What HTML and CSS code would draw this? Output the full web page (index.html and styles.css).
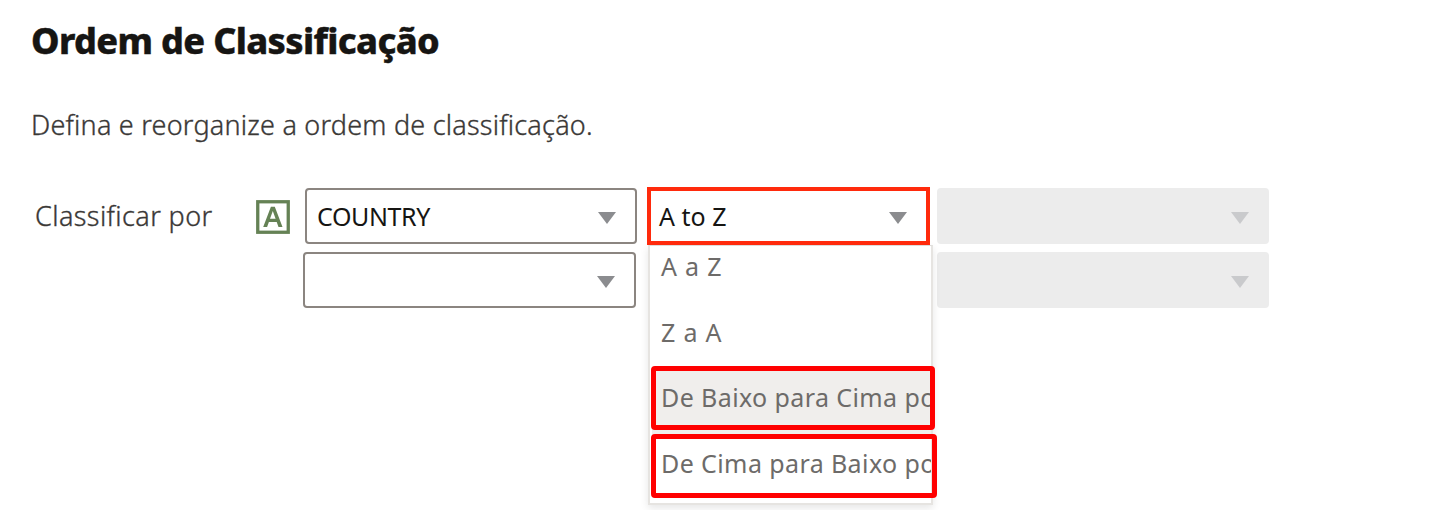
FILE: index.html
```html
<!DOCTYPE html>
<html lang="pt-BR">
<head>
<meta charset="utf-8">
<title>Ordem de Classificação</title>
<link rel="stylesheet" href="styles.css">
</head>
<body>
<main class="panel">
  <h1 class="title">Ordem de Classificação</h1>
  <p class="intro">Defina e reorganize a ordem de classificação.</p>
  <div class="sort-row">
    <span class="label">Classificar por</span>
    <svg class="type-icon" viewBox="0 0 34 34"><rect x="1.75" y="1.75" width="30.5" height="30.5" fill="none" stroke="#658255" stroke-width="3.3"/><path fill="#658255" fill-rule="evenodd" d="M14.9 6.8H18.8L26.5 27H22.5L20.7 22H12.9L11.1 27H7.2ZM14 18.8H19.6L16.8 10.9Z"/></svg>
    <div class="select"><span class="country">COUNTRY</span><svg class="arrow" viewBox="0 0 18 12"><path d="M0 0H18L9 12Z"/></svg></div>
    <div class="order">
      <div class="select active"><span>A to Z</span><svg class="arrow" viewBox="0 0 18 12"><path d="M0 0H18L9 12Z"/></svg></div>
      <ul class="menu">
        <li class="option short">A a Z</li>
        <li class="option short">Z a A</li>
        <li class="option hover">De Baixo para Cima po</li>
        <li class="option">De Cima para Baixo po</li>
      </ul>
      <div class="mark mark-up"></div>
      <div class="mark mark-down"></div>
    </div>
    <div class="select disabled"><svg class="arrow" viewBox="0 0 18 12"><path d="M0 0H18L9 12Z"/></svg></div>
  </div>
  <div class="sort-row second">
    <div class="select empty"><svg class="arrow" viewBox="0 0 18 12"><path d="M0 0H18L9 12Z"/></svg></div>
    <div class="select disabled"><svg class="arrow" viewBox="0 0 18 12"><path d="M0 0H18L9 12Z"/></svg></div>
  </div>
</main>
</body>
</html>
```
FILE: styles.css
```css
* { box-sizing: border-box; }
body {
  margin: 0;
  background: #fff;
  color: #3a3836;
  font-family: "Noto Sans", "Open Sans", sans-serif;
  overflow: hidden;
}
.panel { width: 1444px; height: 510px; padding: 16px 0 0 31px; }
.title {
  margin: 0;
  font-size: 36px;
  line-height: 50px;
  font-weight: 800;
  letter-spacing: -.65px;
  color: #161513;
  white-space: nowrap;
  -webkit-text-stroke: .4px #161513;
}
.intro {
  margin: 39px 0 43px;
  font-size: 27px;
  font-weight: 300;
  letter-spacing: .22px;
  line-height: 40px;
  white-space: nowrap;
  -webkit-text-stroke: .35px #3a3836;
}
.sort-row { display: flex; height: 56px; }
.label {
  width: 225px;
  padding-left: 4px;
  font-size: 27px;
  font-weight: 300;
  letter-spacing: .4px;
  line-height: 55px;
  white-space: nowrap;
  -webkit-text-stroke: .35px #3a3836;
}
.type-icon { width: 34px; height: 34px; margin: 12px 15px 0 0; }
.select {
  display: flex;
  align-items: center;
  width: 332px;
  height: 56px;
  padding: 0 19px 0 10px;
  border: 2px solid #8b8580;
  border-radius: 4px;
  color: #161513;
  font-size: 25px;
  background: #fff;
  white-space: nowrap;
}
.country { letter-spacing: -.4px; }
.arrow { width: 18px; height: 12px; margin: 4px 0 0 auto; fill: #8b8c8f; }
.order { position: relative; width: 283px; margin: -1px 7px 0 10px; }
.active {
  position: relative;
  z-index: 2;
  width: 283px;
  height: 58px;
  padding: 0 19px 0 8px;
  border: 4px solid #ff2a0c;
  border-radius: 0;
}
.disabled { border: 0; background: #ececec; padding-right: 20px; }
.disabled .arrow { fill: #c9cacc; }
.second { margin-top: 8px; padding-left: 272px; }
.empty { width: 333px; margin-right: 301px; }
.menu {
  position: absolute;
  z-index: 1;
  top: 58px;
  left: 1px;
  width: 285px;
  height: 260px;
  margin: 0;
  padding: 0 0 0 2px;
  overflow: hidden;
  list-style: none;
  background: #fff;
  border: 2px solid #e6e4e1;
  border-top: 1px solid #dedcda;
  box-shadow: 0 3px 8px rgba(0, 0, 0, .1);
}
.option {
  height: 65.6px;
  padding-left: 9px;
  color: #6d6b69;
  font-size: 25px;
  letter-spacing: .4px;
  line-height: 41px;
  white-space: nowrap;
}
.short { letter-spacing: .8px; }
.hover { height: 69px; margin: -9px 0 5.6px; padding-top: 9px; background: #f0eeec; }
.mark { position: absolute; z-index: 3; left: 4px; height: 64px; border: 5px solid #f00; border-radius: 4px; }
.mark-up { top: 179px; width: 284px; }
.mark-down { top: 247px; width: 286px; }
```
